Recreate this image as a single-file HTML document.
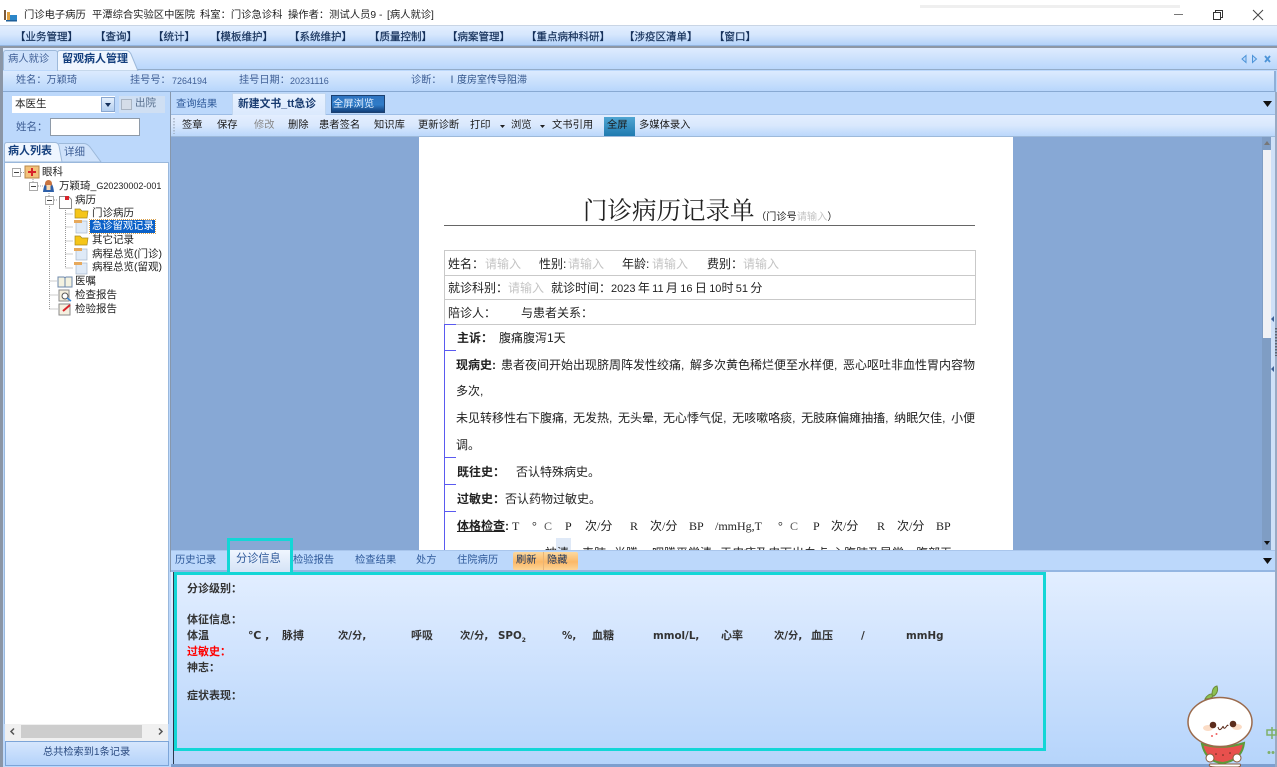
<!DOCTYPE html>
<html lang="zh"><head><meta charset="utf-8"><title>门诊电子病历</title>
<style>
html,body{margin:0;padding:0}
body{width:1277px;height:767px;overflow:hidden;position:relative;background:#fff;font-family:"Liberation Sans","Noto Sans CJK SC",sans-serif;font-size:10.5px;color:#1a1a1a}
.b{position:absolute;box-sizing:border-box}
.t{position:absolute;white-space:pre;line-height:14px}
.m{font-size:10.5px;color:#15305a;top:30px;-webkit-text-stroke:.2px #15305a}
.d{font-size:12px;color:#222;line-height:16px}
.d s{display:inline-block;width:9px;text-decoration:none}
.d b{font-weight:bold}
.bd{font-weight:bold}
.g{color:#c4c4c4}
.nv{color:#3f5f96;font-size:10.5px}
.tr{font-size:10.5px;color:#222}
.f{font-size:11px;font-weight:bold;color:#333;line-height:14px;font-family:"DejaVu Sans","Noto Sans CJK SC",sans-serif}
.fl{font-size:10.3px}
.tb{font-size:10.3px;color:#1a1a1a;top:119px}
.tab{font-size:10.3px;color:#2f5a9a;top:554px}
.x{font-family:"Liberation Serif","Noto Sans CJK SC",serif;top:518px}
svg{position:absolute;overflow:visible}
</style></head><body>

<!-- title bar -->
<svg style="left:4px;top:9px" width="14" height="13" viewBox="0 0 14 13"><rect x="0" y="1" width="2" height="10" fill="#7a5a3c"/><rect x="3" y="3" width="3" height="8" fill="#e0a040"/><path d="M6 6h7v5H6z" fill="#2c86c8"/><path d="M2 11h11v1.500H2z" fill="#1d5f9a"/></svg>
<div class="t" style="left:24px;top:9px;font-size:10.3px;color:#222">门诊电子病历</div>
<div class="t" style="left:92px;top:9px;font-size:10.3px;color:#222">平潭综合实验区中医院</div>
<div class="t" style="left:200px;top:9px;font-size:10.3px;color:#222">科室：门诊急诊科</div>
<div class="t" style="left:288px;top:9px;font-size:10.3px;color:#222">操作者：测试人员9 -</div>
<div class="t" style="left:387px;top:9px;font-size:10.3px;color:#222">[病人就诊]</div>
<div class="b" style="left:920px;top:5px;width:260px;height:3px;background:#efefef"></div>
<div class="b" style="left:1174px;top:14px;width:9px;height:1px;background:#777"></div>
<svg style="left:1213px;top:10px" width="10" height="10" viewBox="0 0 10 10"><path d="M.5 2.500h7v7h-7zM2.500 2.500V.5h7v7H7.500" fill="none" stroke="#333"/></svg>
<svg style="left:1253px;top:10px" width="10" height="10" viewBox="0 0 10 10"><path d="M0 0l10 10M10 0L0 10" stroke="#444" stroke-width="1"/></svg>

<!-- main bg -->
<div class="b" style="left:0;top:25px;width:1277px;height:742px;background:#bcd8fb"></div>

<!-- menu -->
<div class="b" style="left:0;top:25px;width:1277px;height:21px;background:linear-gradient(#e2eefe,#d6e7fd 45%,#b3d2f9);border-top:1px solid #c9d5e5;border-bottom:1px solid #93b5e0"></div>
<div class="b" style="left:0;top:46px;width:1277px;height:2px;background:#8d97a5"></div>
<div class="t m" style="left:15px">【业务管理】</div>
<div class="t m" style="left:95px">【查询】</div>
<div class="t m" style="left:153px">【统计】</div>
<div class="t m" style="left:210px">【模板维护】</div>
<div class="t m" style="left:289px">【系统维护】</div>
<div class="t m" style="left:369px">【质量控制】</div>
<div class="t m" style="left:447px">【病案管理】</div>
<div class="t m" style="left:526px">【重点病种科研】</div>
<div class="t m" style="left:624px">【涉疫区清单】</div>
<div class="t m" style="left:714px">【窗口】</div>

<!-- top tabs -->
<div class="b" style="left:0;top:48px;width:1277px;height:22px;background:linear-gradient(#dfecfe,#b9d7fb);border-bottom:1px solid #93acc9"></div>
<div class="b" style="left:3px;top:50px;width:55px;height:20px;background:#cfe2fb;border:1px solid #9db9da;border-bottom:0;border-radius:3px 3px 0 0"></div>
<div class="t" style="left:8px;top:53px;font-size:10.3px;color:#3f5f96">病人就诊</div>
<svg style="left:57px;top:50px" width="82" height="21" viewBox="0 0 82 21"><path d="M.5 21V3Q.5.5 3 .5H69Q72 .5 74 4L81 21z" fill="#eff6ff" stroke="#9db9da"/></svg>
<div class="t bd" style="left:62px;top:52px;font-size:11px;color:#15407e">留观病人管理</div>
<svg style="left:1241px;top:55px" width="31" height="8" viewBox="0 0 31 8"><path d="M5 .5L1 4l4 3.500zM11.500 .5L15.500 4l-4 3.500z" fill="#bcd8fb" stroke="#4d94d8"/><path d="M24 1l5 6M29 1l-5 6" stroke="#4d94d8" stroke-width="1.800"/></svg>

<!-- patient info -->
<div class="b" style="left:3px;top:71px;width:1273px;height:21px;background:linear-gradient(#dcebfe,#b8d6fb);border-right:2px solid #8fb0d8;border-bottom:1px solid #88a9d2"></div>
<div class="t nv" style="left:16px;top:74px;font-size:10.2px">姓名：万颖琦</div>
<div class="t nv" style="left:130px;top:74px;font-size:10.2px">挂号号：</div>
<div class="t nv" style="left:172px;top:74px;font-size:9px">7264194</div>
<div class="t nv" style="left:239px;top:74px;font-size:10.2px">挂号日期：</div>
<div class="t nv" style="left:290px;top:74px;font-size:9px">20231116</div>
<div class="t nv" style="left:411px;top:74px;font-size:10.2px">诊断：</div>
<div class="t" style="left:447px;top:74px;font-size:10px;color:#2f5288">Ⅰ度房室传导阻滞</div>

<!-- left panel -->
<div class="b" style="left:0;top:48px;width:3px;height:719px;background:#8b96a6"></div>
<div class="b" style="left:3px;top:92px;width:167px;height:48px;background:#bcd8fb"></div>
<div class="b" style="left:12px;top:96px;width:103px;height:17px;background:#fff"></div>
<div class="t" style="left:15px;top:97px;font-size:10.5px;color:#222">本医生</div>
<div class="b" style="left:101px;top:97px;width:14px;height:15px;background:linear-gradient(#e6f0fd,#b4cff0);border:1px solid #8aa7cf"></div>
<svg style="left:105px;top:103px" width="6" height="4"><path d="M0 0h6L3 4z" fill="#15305a"/></svg>
<div class="b" style="left:119px;top:96px;width:46px;height:17px;background:#cfdff3"></div>
<div class="b" style="left:121px;top:99px;width:11px;height:11px;background:#d5dde8;border:1px solid #a9b4c2"></div>
<div class="t" style="left:135px;top:96px;font-size:10.5px;color:#59708f">出院</div>
<div class="t nv" style="left:16px;top:120px">姓名：</div>
<div class="b" style="left:50px;top:118px;width:90px;height:18px;background:#fff;border:1px solid #8e9aa8"></div>

<!-- left tabs -->
<div class="b" style="left:4px;top:140px;width:166px;height:22px;background:#bcd8fb"></div>
<svg style="left:57px;top:143px" width="45" height="19" viewBox="0 0 45 19"><path d="M.5 19V3Q.5.5 3 .5H27Q30 .5 33 4L44 19z" fill="#cfe2fb" stroke="#9db9da"/></svg>
<svg style="left:4px;top:142px" width="58" height="20" viewBox="0 0 58 20"><path d="M.5 20V3Q.5.500 3 .5H51Q54 .500 55 4L58 20z" fill="#eff6ff" stroke="#9db9da"/></svg>
<div class="t bd" style="left:8px;top:144px;font-size:11px;color:#15407e">病人列表</div>
<div class="t" style="left:64px;top:145px;font-size:10.5px;color:#3f5f96">详细</div>

<!-- tree -->
<div class="b" style="left:4px;top:162px;width:165px;height:562px;background:#fff;border:1px solid #9ab8dc;border-bottom:0"></div>
<svg style="left:12px;top:165px" width="75" height="150" viewBox="0 0 75 150">
<g fill="none" stroke="#999" stroke-dasharray="1 1">
<path d="M9 7.500h5M21 14V21M26 21h5M37 28V35M42 35h4M37.500 41V144M37.500 116H46M37.500 130H46M37.500 144H46M53.500 41V103M53.500 49h8M53.500 62h8M53.500 76h8M53.500 89h8M53.500 103h8"/>
</g>
<g fill="#fff" stroke="#aaa"><rect x=".5" y="3.500" width="8" height="8"/><rect x="17.500" y="17.500" width="8" height="8"/><rect x="33.500" y="31.500" width="8" height="8"/></g>
<path d="M2 7.500h5M19 21.500h5M35 35.500h5" stroke="#444"/>
<rect x="13" y="1" width="14" height="12" fill="#f2c27a" stroke="#b8874a"/><path d="M20 3v8M16 7h8" stroke="#d8232a" stroke-width="2"/>
<path d="M31 27q1-10 5.500-10t5.500 10z" fill="#2d5fa8"/><circle cx="36.500" cy="18.500" r="3.500" fill="#c9743f"/><rect x="34.500" y="20" width="4" height="5" fill="#f6d9b4"/>
<path d="M47.500 31.500h9l3 3v9h-12z" fill="#fff" stroke="#8a8a8a"/><rect x="53" y="31" width="4" height="4" fill="#d8232a"/>
</svg>
<svg style="left:72px;top:205px" width="20" height="76" viewBox="0 0 20 76">
<path d="M3 4h5l2 2h6l-1 7H3z" fill="#f5c518" stroke="#a88a20" stroke-width=".7"/>
<path d="M3 31h5l2 2h6l-1 7H3z" fill="#f5c518" stroke="#a88a20" stroke-width=".7"/>
<g fill="#dfeaf7" stroke="#a5b7cc" stroke-width=".7"><rect x="4" y="16" width="11" height="12"/><rect x="4" y="44" width="11" height="11"/><rect x="4" y="58" width="11" height="11"/></g>
<g fill="#e7a95c"><rect x="2" y="15" width="8" height="3"/><rect x="2" y="43" width="8" height="3"/><rect x="2" y="57" width="8" height="3"/></g>
</svg>
<svg style="left:57px;top:274px" width="16" height="42" viewBox="0 0 16 42">
<path d="M1 3h6l1 1 1-1h6v10H1z" fill="#f4f2e0" stroke="#6d88ad"/><path d="M8 4v9" stroke="#6d88ad"/>
<rect x="2" y="16" width="10" height="11" fill="#f5f0e0" stroke="#8a8a8a"/><circle cx="8" cy="22" r="3" fill="#fff" stroke="#555"/><path d="M10 24l4 3" stroke="#3d8ad8" stroke-width="1.500"/>
<rect x="2" y="30" width="11" height="11" fill="#f5f0e0" stroke="#8a8a8a"/><path d="M6 37l7-6" stroke="#d8232a" stroke-width="2"/>
</svg>
<div class="t tr" style="left:42px;top:165px">眼科</div>
<div class="t tr" style="left:59px;top:179px">万颖琦_<span style="font-size:9px">G20230002-001</span></div>
<div class="t tr" style="left:75px;top:193px">病历</div>
<div class="t tr" style="left:92px;top:206px">门诊病历</div>
<div class="b" style="left:90px;top:220px;width:65px;height:13px;background:#0a60c8;outline:1px dotted #d9a04a"></div>
<div class="t tr" style="left:92px;top:220px;color:#fff;line-height:13px;font-size:10.3px">急诊留观记录</div>
<div class="t tr" style="left:92px;top:233px">其它记录</div>
<div class="t tr" style="left:92px;top:247px">病程总览(门诊)</div>
<div class="t tr" style="left:92px;top:260px">病程总览(留观)</div>
<div class="t tr" style="left:75px;top:274px">医嘱</div>
<div class="t tr" style="left:75px;top:288px">检查报告</div>
<div class="t tr" style="left:75px;top:302px">检验报告</div>

<!-- left scrollbar -->
<div class="b" style="left:5px;top:724px;width:163px;height:17px;background:#f0f0f0"></div>
<div class="b" style="left:21px;top:725px;width:121px;height:13px;background:#cdcdcd"></div>
<svg style="left:10px;top:728px" width="155" height="7" viewBox="0 0 155 7"><path d="M4 .5L1 3.500l3 3" fill="none" stroke="#555" stroke-width="1.500"/><path d="M149 .5l3 3-3 3" fill="none" stroke="#555" stroke-width="1.500"/></svg>
<div class="b" style="left:5px;top:741px;width:164px;height:25px;background:linear-gradient(#d5e6fd,#b5d3fa);border:1px solid #7ca5d8"></div>
<div class="t" style="left:43px;top:746px;font-size:10.2px;color:#2a4a80">总共检索到1条记录</div>

<!-- splitter -->
<div class="b" style="left:170px;top:92px;width:1px;height:480px;background:#8797ab"></div>

<!-- doc tabs -->
<div class="b" style="left:171px;top:92px;width:1105px;height:23px;background:#bcd8fb;border-bottom:1px solid #9dbde6"></div>
<div class="t" style="left:176px;top:98px;font-size:10.3px;color:#2f5a9a">查询结果</div>
<div class="b" style="left:232px;top:93px;width:94px;height:22px;background:linear-gradient(#e8f2ff,#dbe9fd);border:1px solid #c0d6f0;border-bottom:0"></div>
<div class="t bd" style="left:238px;top:97px;font-size:10.8px;color:#16396f">新建文书_tt急诊</div>
<div class="b" style="left:331px;top:95px;width:54px;height:18px;background:linear-gradient(#2f74c0,#2f7cc8 55%,#123f7a);border:1px solid #1c406f"></div>
<div class="t" style="left:333px;top:98px;font-size:10.3px;color:#e4f0ff">全屏浏览</div>
<svg style="left:1263px;top:101px" width="9" height="6"><path d="M0 0h9L4.500 6z" fill="#111"/></svg>

<!-- toolbar -->
<div class="b" style="left:171px;top:115px;width:1105px;height:22px;background:linear-gradient(#e4eefe,#d9e8fd 50%,#bad7fb);border-bottom:1px solid #9db9da"></div>
<svg style="left:173px;top:118px" width="2" height="16"><path d="M1 0v16" stroke="#8c98a8" stroke-dasharray="1.500 1.500"/></svg>
<div class="t tb" style="left:182px">签章</div>
<div class="t tb" style="left:217px">保存</div>
<div class="t tb" style="left:254px;color:#888">修改</div>
<div class="t tb" style="left:288px">删除</div>
<div class="t tb" style="left:319px">患者签名</div>
<div class="t tb" style="left:374px">知识库</div>
<div class="t tb" style="left:418px">更新诊断</div>
<div class="t tb" style="left:470px">打印</div>
<svg style="left:500px;top:125px" width="5" height="3"><path d="M0 0h5L2.500 3z" fill="#222"/></svg>
<div class="t tb" style="left:511px">浏览</div>
<svg style="left:540px;top:125px" width="5" height="3"><path d="M0 0h5L2.500 3z" fill="#222"/></svg>
<div class="t tb" style="left:552px">文书引用</div>
<div class="b" style="left:604px;top:117px;width:31px;height:19px;background:linear-gradient(#4fa5d2,#1f7ab0)"></div>
<div class="t tb" style="left:607px">全屏</div>
<div class="t tb" style="left:639px">多媒体录入</div>

<!-- doc area -->
<div class="b" style="left:171px;top:137px;width:1091px;height:413px;background:#87a8d5"></div>
<div class="b" style="left:419px;top:137px;width:594px;height:413px;background:#fff"></div>
<!-- scrollbars -->
<div class="b" style="left:1262px;top:137px;width:9px;height:413px;background:#7f9dc4"></div>
<div class="b" style="left:1263px;top:150px;width:8px;height:188px;background:#f0f1f5"></div>
<svg style="left:1264px;top:141px" width="6" height="408"><path d="M0 4h6L3 0z" fill="#777"/><path d="M0 400h6L3 404z" fill="#111"/></svg>
<div class="b" style="left:1271px;top:137px;width:4px;height:413px;background:#cfe0f7"></div>
<div class="b" style="left:1275px;top:92px;width:2px;height:675px;background:#98aac4"></div>
<svg style="left:1270px;top:314px" width="7" height="60" viewBox="0 0 7 60"><path d="M4 2L1 5l3 3zM4 52l-3 3 3 3z" fill="#3d5f95"/><path d="M6 14v28" stroke="#222" stroke-dasharray="1.500 1.500"/></svg>

<!-- doc contents -->
<div class="t" style="left:583px;top:197px;font-size:24.5px;line-height:30px;color:#222;font-family:'Liberation Serif','Noto Serif CJK SC',serif">门诊病历记录单</div>
<div class="t" style="left:756px;top:211px;font-size:10.200px;color:#222">（门诊号<span class="g">请输入</span>）</div>
<div class="b" style="left:444px;top:225px;width:531px;height:1px;background:#666"></div>

<div class="b" style="left:444px;top:250px;width:532px;height:75px;border:1px solid #c9c9c9"></div>
<div class="b" style="left:445px;top:275px;width:530px;height:1px;background:#c9c9c9"></div>
<div class="b" style="left:445px;top:299px;width:530px;height:1px;background:#c9c9c9"></div>
<div class="t d" style="left:448px;top:256px">姓名：</div><div class="t d g" style="left:485px;top:256px">请输入</div>
<div class="t d" style="left:539px;top:256px">性别:</div><div class="t d g" style="left:568px;top:256px">请输入</div>
<div class="t d" style="left:622px;top:256px">年龄:</div><div class="t d g" style="left:652px;top:256px">请输入</div>
<div class="t d" style="left:707px;top:256px">费别：</div><div class="t d g" style="left:743px;top:256px">请输入</div>
<div class="t d" style="left:448px;top:280px">就诊科别：</div><div class="t d g" style="left:508px;top:280px">请输入</div>
<div class="t d" style="left:551px;top:280px;word-spacing:-1px">就诊时间：<span style="font-size:11px">2023</span> 年 <span style="font-size:11px">11</span> 月 <span style="font-size:11px">16</span> 日 <span style="font-size:11px">10</span>时 <span style="font-size:11px">51</span> 分</div>
<div class="t d" style="left:448px;top:305px">陪诊人：</div>
<div class="t d" style="left:521px;top:305px">与患者关系：</div>

<!-- blue revision marks -->
<div class="b" style="left:444px;top:324px;width:1px;height:226px;background:#5a5af0"></div>
<div class="b" style="left:444px;top:324px;width:12px;height:1px;background:#5a5af0"></div>
<div class="b" style="left:444px;top:350px;width:12px;height:1px;background:#5a5af0"></div>
<div class="b" style="left:444px;top:457px;width:12px;height:1px;background:#5a5af0"></div>
<div class="b" style="left:444px;top:484px;width:12px;height:1px;background:#5a5af0"></div>
<div class="b" style="left:444px;top:511px;width:12px;height:1px;background:#5a5af0"></div>

<div class="t d" style="left:457px;top:330px"><b>主诉：</b></div><div class="t d" style="left:499px;top:330px">腹痛腹泻1天</div>
<div class="t d" style="left:456px;top:357px"><b>现病史<s>:</s></b>患者夜间开始出现脐周阵发性绞痛<s>,</s>解多次黄色稀烂便至水样便<s>,</s>恶心呕吐非血性胃内容物</div>
<div class="t d" style="left:456px;top:383px">多次<s>,</s></div>
<div class="t d" style="left:456px;top:410px">未见转移性右下腹痛<s>,</s>无发热<s>,</s>无头晕<s>,</s>无心悸气促<s>,</s>无咳嗽咯痰<s>,</s>无肢麻偏瘫抽搐<s>,</s>纳眠欠佳<s>,</s>小便</div>
<div class="t d" style="left:456px;top:437px">调。</div>
<div class="t d" style="left:457px;top:464px"><b>既往史：</b></div><div class="t d" style="left:516px;top:464px">否认特殊病史。</div>
<div class="t d" style="left:457px;top:491px"><b>过敏史：</b></div><div class="t d" style="left:505px;top:491px">否认药物过敏史。</div>
<div class="t d" style="left:457px;top:518px"><b><u>体格检查</u>:</b></div>
<div class="t d x" style="left:512px">T</div><div class="t d x" style="left:532px">°</div><div class="t d x" style="left:544px;color:#555">C</div>
<div class="t d x" style="left:565px">P</div><div class="t d x" style="left:585px">次/分</div>
<div class="t d x" style="left:630px">R</div><div class="t d x" style="left:650px">次/分</div>
<div class="t d x" style="left:689px">BP</div><div class="t d x" style="left:715px">/mmHg,T</div>
<div class="t d x" style="left:778px">°</div><div class="t d x" style="left:790px;color:#555">C</div>
<div class="t d x" style="left:813px">P</div><div class="t d x" style="left:831px">次/分</div>
<div class="t d x" style="left:877px">R</div><div class="t d x" style="left:897px">次/分</div>
<div class="t d x" style="left:936px">BP</div>
<div class="b" style="left:556px;top:538px;width:15px;height:12px;background:#dfe9f7"></div>
<div class="b" style="left:456px;top:545px;width:520px;height:5px;overflow:hidden">
<div class="t d" style="left:64px;top:0">mm</div>
<div class="t d" style="left:89px;top:0">神清</div>
<div class="t d" style="left:126px;top:0">表肺</div>
<div class="t d" style="left:158px;top:0">肖腾</div>
<div class="t d" style="left:196px;top:0">咽腾平常清</div>
<div class="t d" style="left:264px;top:0">于皮疹及皮下出血点</div>
<div class="t d" style="left:376px;top:0">心腹肺及异常</div>
<div class="t d" style="left:460px;top:0">腹部无</div>
</div>

<!-- bottom tabs -->
<div class="b" style="left:171px;top:550px;width:1104px;height:22px;background:#bcd8fb;border-top:1px solid #a9c6ec;border-bottom:2px solid #94b6e2"></div>
<div class="t tab" style="left:175px">历史记录</div>
<div class="b" style="left:230px;top:550px;width:60px;height:22px;background:linear-gradient(#f0f6ff,#d5e3f6)"></div>
<div class="t" style="left:236px;top:552px;font-size:11.200px;color:#2f5a9a">分诊信息</div>
<div class="b" style="left:227px;top:538px;width:66px;height:38px;border:3px solid #13d6d6"></div>
<div class="t tab" style="left:293px">检验报告</div>
<div class="t tab" style="left:355px">检查结果</div>
<div class="t tab" style="left:416px">处方</div>
<div class="t tab" style="left:457px">住院病历</div>
<div class="b" style="left:513px;top:552px;width:65px;height:18px;background:linear-gradient(#fbd9a0,#fbb868 55%,#fdd596);border-radius:2px"></div>
<div class="b" style="left:543px;top:552px;width:1px;height:18px;background:#e8b577"></div>
<div class="t" style="left:516px;top:554px;font-size:10.3px;color:#15305a">刷新</div>
<div class="t" style="left:547px;top:554px;font-size:10.3px;color:#15305a">隐藏</div>
<svg style="left:1263px;top:558px" width="9" height="6"><path d="M0 0h9L4.500 6z" fill="#111"/></svg>

<!-- triage panel -->
<div class="b" style="left:171px;top:572px;width:1104px;height:195px;background:linear-gradient(#e2eeff,#d5e6fe 30%,#b5d4fb)"></div>
<div class="b" style="left:173px;top:572px;width:1px;height:193px;background:#2c3a4e"></div>
<div class="b" style="left:174px;top:572px;width:872px;height:179px;border:3px solid #13d6d6"></div>
<div class="b" style="left:171px;top:764px;width:1104px;height:3px;background:#7d9fcf"></div>
<div class="t f" style="left:187px;top:582px">分诊级别：</div>
<div class="t f" style="left:187px;top:613px">体征信息：</div>
<div class="t f" style="left:187px;top:629px">体温</div>
<div class="t f" style="left:248px;top:629px">℃ ,</div>
<div class="t f" style="left:282px;top:629px">脉搏</div>
<div class="t f fl" style="left:338px;top:629px">次/分,</div>
<div class="t f" style="left:411px;top:629px">呼吸</div>
<div class="t f fl" style="left:460px;top:629px">次/分,</div>
<div class="t f fl" style="left:498px;top:629px">SPO<sub style="font-size:6px;line-height:0">2</sub></div>
<div class="t f fl" style="left:562px;top:629px">%,</div>
<div class="t f" style="left:592px;top:629px">血糖</div>
<div class="t f fl" style="left:653px;top:629px">mmol/L,</div>
<div class="t f" style="left:721px;top:629px">心率</div>
<div class="t f fl" style="left:774px;top:629px">次/分,</div>
<div class="t f" style="left:811px;top:629px">血压</div>
<div class="t f fl" style="left:861px;top:629px">/</div>
<div class="t f fl" style="left:906px;top:629px">mmHg</div>
<div class="t f" style="left:187px;top:645px;color:#f00">过敏史：</div>
<div class="t f" style="left:187px;top:661px">神志：</div>
<div class="t f" style="left:187px;top:689px">症状表现：</div>

<!-- mascot -->
<svg style="left:1150px;top:660px" width="127" height="107" viewBox="0 0 127 107">
<path d="M55 39q3-6 9-5-1 5-9 5z" fill="#8cc152" stroke="#6e8a3a"/>
<path d="M62 35q0-8 5-9 2 6-3 10z" fill="#8cc152" stroke="#6e8a3a"/>
<path d="M60 104q-3 3 6 3h20q6 0 4-3z" fill="#fff" stroke="#8a5a3c"/>
<path d="M52 84Q73 90 94 83 92 100 73 103 56 102 52 84z" fill="#e8504d" stroke="#5c9a3a" stroke-width="2"/>
<circle cx="66" cy="94" r=".8" fill="#5c2c1c"/><circle cx="73" cy="95" r=".8" fill="#5c2c1c"/><circle cx="80" cy="93" r=".8" fill="#5c2c1c"/>
<ellipse cx="70" cy="62" rx="32" ry="24.500" fill="#fff" stroke="#9a6a4c" stroke-width="1.500"/>
<ellipse cx="58" cy="68" rx="5" ry="3" fill="#fbdcc6"/><ellipse cx="87" cy="67" rx="5" ry="3" fill="#fbdcc6"/>
<circle cx="63" cy="65" r="3.300" fill="#5c2c1c"/><circle cx="83" cy="64" r="3.300" fill="#5c2c1c"/>
<path d="M68 67q1 4 3 2t2-3q1 4 3 1t2-1" fill="none" stroke="#5c2c1c"/>
<circle cx="62" cy="76" r="1" fill="#f06060"/><circle cx="66.500" cy="74" r="1" fill="#f06060"/>
<ellipse cx="60" cy="98" rx="4" ry="4" fill="#fff" stroke="#8a5a3c"/><ellipse cx="87" cy="98" rx="4" ry="4" fill="#fff" stroke="#8a5a3c"/>
<path d="M122 67v12M117 70h9v5h-9z" fill="none" stroke="#7fb069" stroke-width="1.500"/>
<circle cx="119" cy="92.500" r="1.500" fill="#7fb069"/><circle cx="123" cy="92.500" r="1.500" fill="#7fb069"/>
</svg>
</body></html>
